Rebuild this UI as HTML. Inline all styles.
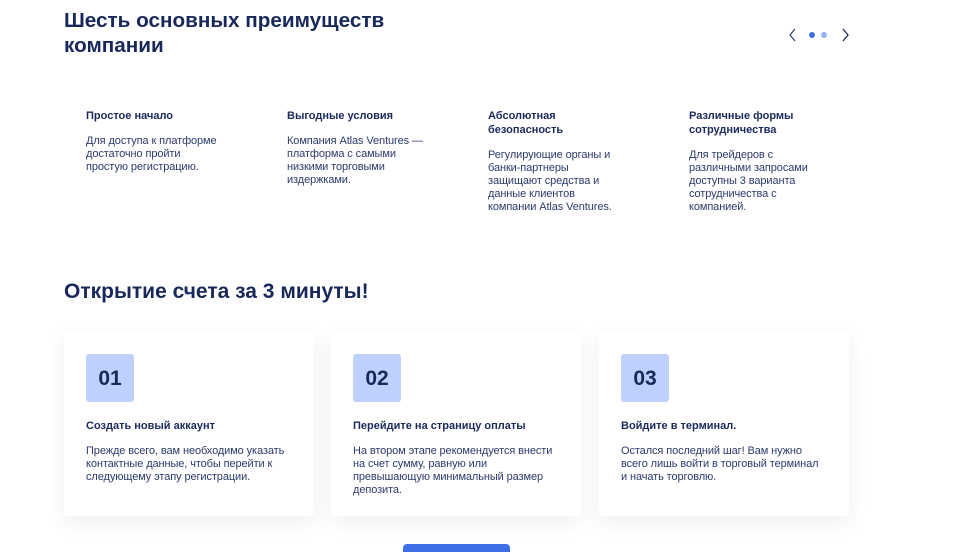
<!DOCTYPE html>
<html><head><meta charset="utf-8"><style>
*{margin:0;padding:0;box-sizing:border-box}
html,body{width:968px;height:552px;overflow:hidden}
body{background:#fff;font-family:"Liberation Sans",Arial,sans-serif;color:#1b2a5c;position:relative}
.h1{position:absolute;left:64px;top:8px;font-size:20.7px;font-weight:bold;line-height:25px;color:#18285a}
.nav{position:absolute;left:786px;top:26px;width:70px;height:18px}
.f{position:absolute;top:109px;width:170px}
.f b{display:block;font-size:11px;line-height:14px;color:#1b2a5c}
.f p{margin-top:12px;font-size:11px;line-height:13px;color:#2c3a6b;letter-spacing:-0.1px}
.h2{position:absolute;left:64px;top:279px;font-size:21px;font-weight:bold;color:#18285a;line-height:25px}
.c{position:absolute;top:332px;width:250px;height:184px;background:#fff;border-radius:4px;box-shadow:0 6px 20px rgba(30,40,80,0.07)}
.n{position:absolute;left:22px;top:22px;width:48px;height:48px;background:#bed0fb;border-radius:3px;font-size:21px;font-weight:bold;text-align:center;line-height:50px;color:#18285a}
.c b{position:absolute;left:22px;top:88px;font-size:11px;color:#1b2a5c}
.c p{position:absolute;left:22px;top:113px;width:225px;font-size:11px;line-height:13px;color:#2c3a6b;letter-spacing:-0.1px}
.btn{position:absolute;left:403px;top:544px;width:107px;height:8px;background:#3e6fe6;border-radius:4px 4px 0 0}
</style></head><body>
<div class="h1">Шесть основных преимуществ<br>компании</div>
<svg class="nav" viewBox="0 0 70 18"><path d="M9 3 L4 9 L9 15" stroke="#3a4670" stroke-width="1.3" fill="none"/><circle cx="26" cy="9" r="3" fill="#3d6fe8"/><circle cx="38" cy="9" r="3" fill="#93b0f4"/><path d="M57 3 L62 9 L57 15" stroke="#1b2a5c" stroke-width="1.3" fill="none"/></svg>
<div class="f" style="left:86px"><b>Простое начало</b><p>Для доступа к платформе<br>достаточно пройти<br>простую регистрацию.</p></div>
<div class="f" style="left:287px"><b>Выгодные условия</b><p>Компания Atlas Ventures —<br>платформа с самыми<br>низкими торговыми<br>издержками.</p></div>
<div class="f" style="left:488px"><b>Абсолютная<br>безопасность</b><p>Регулирующие органы и<br>банки-партнеры<br>защищают средства и<br>данные клиентов<br>компании Atlas Ventures.</p></div>
<div class="f" style="left:689px"><b>Различные формы<br>сотрудничества</b><p>Для трейдеров с<br>различными запросами<br>доступны 3 варианта<br>сотрудничества с<br>компанией.</p></div>
<div class="h2">Открытие счета за 3 минуты!</div>
<div class="c" style="left:64px"><div class="n">01</div><b>Создать новый аккаунт</b><p>Прежде всего, вам необходимо указать<br>контактные данные, чтобы перейти к<br>следующему этапу регистрации.</p></div>
<div class="c" style="left:331px"><div class="n">02</div><b>Перейдите на страницу оплаты</b><p>На втором этапе рекомендуется внести<br>на счет сумму, равную или<br>превышающую минимальный размер<br>депозита.</p></div>
<div class="c" style="left:599px"><div class="n">03</div><b>Войдите в терминал.</b><p>Остался последний шаг! Вам нужно<br>всего лишь войти в торговый терминал<br>и начать торговлю.</p></div>
<div class="btn"></div>
</body></html>
